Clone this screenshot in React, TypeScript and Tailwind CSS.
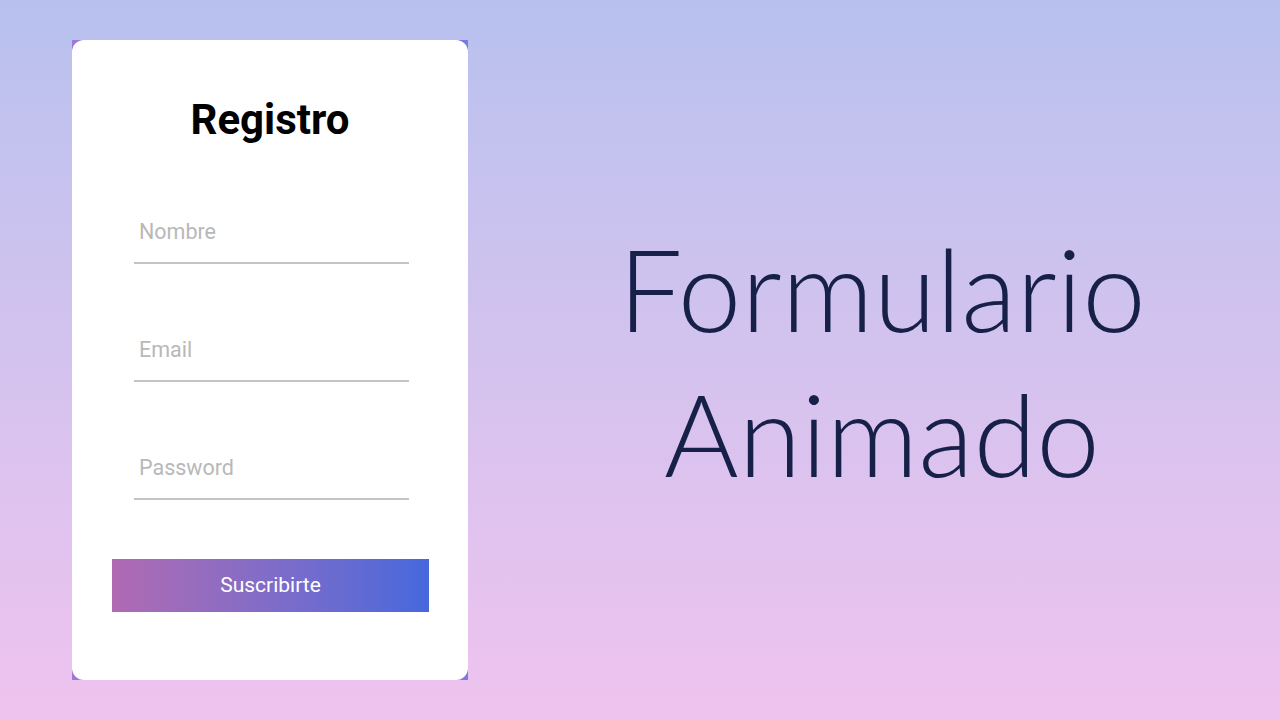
import React from "react";

export default function App() {
  return (
    <div className="flex h-[720px] w-[1280px] bg-gradient-to-b from-[#b8c1ee] to-[#efc3ee] font-['Roboto',sans-serif]">
      {/* card with gradient corners behind it */}
      <div className="ml-[72px] mt-[40px] h-[640px] w-[396px] bg-gradient-to-r from-[#9c7ad8] to-[#7a7ae0]">
        <div className="flex h-full w-full flex-col rounded-xl bg-white pt-[56px]">
          <h2 className="text-center text-[42px] font-bold leading-[48px] text-black">
            Registro
          </h2>
          <form className="mt-[56px] flex flex-col">
            <div className="ml-[62px] flex w-[275px] flex-col gap-[54px]">
              <input
                type="text"
                placeholder="Nombre"
                className="h-[64px] w-full border-b-2 border-[#c4c4c4] bg-transparent pl-[5px] text-[21.5px] text-black outline-none placeholder:text-[#b8b8b8]"
              />
              <input
                type="email"
                placeholder="Email"
                className="h-[64px] w-full border-b-2 border-[#c4c4c4] bg-transparent pl-[5px] text-[21.5px] text-black outline-none placeholder:text-[#b8b8b8]"
              />
              <input
                type="password"
                placeholder="Password"
                className="h-[64px] w-full border-b-2 border-[#c4c4c4] bg-transparent pl-[5px] text-[21.5px] text-black outline-none placeholder:text-[#b8b8b8]"
              />
            </div>
            <button
              type="button"
              className="ml-[40px] mt-[59px] h-[53px] w-[317px] bg-gradient-to-r from-[#b06ab3] to-[#4568dc] text-[21px] text-white"
            >
              Suscribirte
            </button>
          </form>
        </div>
      </div>

      <div className="flex flex-1 items-center justify-center pl-[16px]">
        <h1 className="text-center font-['Lato',sans-serif] text-[114px] font-light leading-[145px] text-[#172048]">
          Formulario
          <br />
          Animado
        </h1>
      </div>
    </div>
  );
}
